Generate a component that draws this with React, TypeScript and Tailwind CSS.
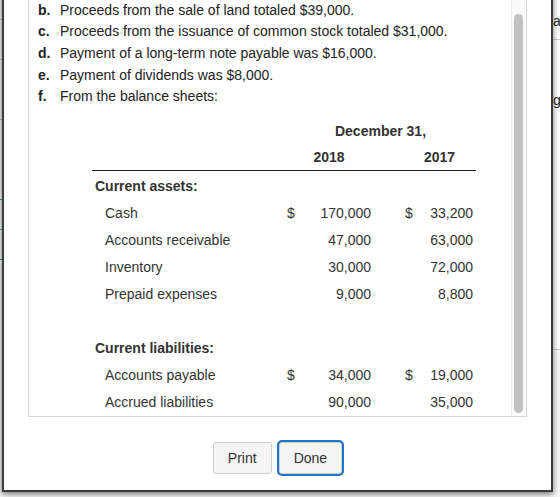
import React from "react";

const items: [string, string][] = [
  ["b.", "Proceeds from the sale of land totaled $39,000."],
  ["c.", "Proceeds from the issuance of common stock totaled $31,000."],
  ["d.", "Payment of a long-term note payable was $16,000."],
  ["e.", "Payment of dividends was $8,000."],
  ["f.", "From the balance sheets:"],
];

type Row =
  | { kind: "head"; label: string }
  | { kind: "blank" }
  | { kind: "row"; label: string; a: string; b: string; dollar?: boolean };

const rows: Row[] = [
  { kind: "head", label: "Current assets:" },
  { kind: "row", label: "Cash", a: "170,000", b: "33,200", dollar: true },
  { kind: "row", label: "Accounts receivable", a: "47,000", b: "63,000" },
  { kind: "row", label: "Inventory", a: "30,000", b: "72,000" },
  { kind: "row", label: "Prepaid expenses", a: "9,000", b: "8,800" },
  { kind: "blank" },
  { kind: "head", label: "Current liabilities:" },
  { kind: "row", label: "Accounts payable", a: "34,000", b: "19,000", dollar: true },
  { kind: "row", label: "Accrued liabilities", a: "90,000", b: "35,000" },
];

function TableRow({ r }: { r: Row }) {
  if (r.kind === "blank") return <div className="h-[27px]" />;
  if (r.kind === "head")
    return (
      <div className="h-[27px] flex items-center pl-[3px] font-bold text-[#333]">{r.label}</div>
    );
  return (
    <div className="h-[27px] grid grid-cols-[193px_88px_30px_73px] items-center text-[#333]">
      <div className="pl-[13px]">{r.label}</div>
      <div className="flex justify-between pl-[2px] pr-[2px]">
        <span>{r.dollar ? "$" : ""}</span>
        <span>{r.a}</span>
      </div>
      <div />
      <div className="flex justify-between pl-[2px] pr-[3px]">
        <span>{r.dollar ? "$" : ""}</span>
        <span>{r.b}</span>
      </div>
    </div>
  );
}

export default function App() {
  return (
    <div
      className="relative w-[560px] h-[497px] overflow-hidden bg-[#f7f7f7] text-[14px]"
      style={{ fontFamily: '"Liberation Sans", Arial, sans-serif' }}
    >
      {/* background page peeking through */}
      <div className="flex h-full">
        <div className="w-[4px] flex flex-col text-[#333]">
          <div className="h-[20px] border-b border-[#bbb]" />
          <div className="h-[40px] border-b border-[#bbb]" />
          <div className="h-[60px] border-b border-[#bbb]" />
          <div className="h-[80px] border-b border-[#5a9bb5]" />
          <div className="h-[30px] border-b border-[#5a9bb5]" />
          <div className="h-[30px] border-b border-[#5a9bb5]" />
        </div>
        <div className="flex-1" />
        <div className="w-[15px] flex flex-col text-[#222] text-[14px] overflow-hidden">
          <div className="h-[40px] pt-[11px] pl-[8px] border-b border-[#ccc] bg-white whitespace-nowrap">at</div>
          <div className="h-[70px] pt-[50px] pl-[8px] bg-white whitespace-nowrap">g</div>
          <div className="h-[240px] border-b border-[#ccc] bg-white" />
        </div>
      </div>

      {/* dialog */}
      <div className="absolute left-[2px] top-[-20px] w-[551px] h-[512px] bg-white border-2 border-[#3c3c3c] shadow-[0_2px_6px_rgba(0,0,0,0.55)] flex flex-col">
        <div className="pt-[8px] px-[24px]">
          <div className="h-[427px] border border-[#d6d6d6] flex overflow-hidden">
            <div className="flex-1 pt-[8.5px] pl-[9px] overflow-hidden">
              <div className="text-[#222] leading-[21.7px]">
                {items.map(([l, t]) => (
                  <div key={l} className="flex">
                    <span className="w-[22px] font-bold">{l}</span>
                    <span>{t}</span>
                  </div>
                ))}
              </div>
              <div className="ml-[54px] mt-[9.5px] w-[384px]">
                <div className="grid grid-cols-[193px_191px] h-[27px] items-center font-bold text-[#333]">
                  <div />
                  <div className="text-center">December 31,</div>
                </div>
                <div className="grid grid-cols-[193px_88px_30px_73px] h-[26px] items-center font-bold text-[#333] border-b border-[#222]">
                  <div />
                  <div className="text-center">2018</div>
                  <div />
                  <div className="text-center">2017</div>
                </div>
                <div className="h-[2px]" />
                {rows.map((r, i) => (
                  <TableRow key={i} r={r} />
                ))}
              </div>
            </div>
            <div className="w-[15px] border-l border-[#ececec] bg-[#fafafa]">
              <div className="ml-[2px] mt-[23px] w-[9px] h-[399px] rounded-full bg-[#c2c2c2]" />
            </div>
          </div>
        </div>
        <div className="mt-[25px] flex justify-center gap-[7px]">
          <button className="h-[32px] px-[14px] bg-[#f5f5f5] border border-[#cfcfcf] rounded-[3px] text-[#333]">
            Print
          </button>
          <button className="h-[32px] px-[14px] bg-[#f5f5f5] border border-[#cfcfcf] rounded-[3px] text-[#333] ring-2 ring-[#1f74c9] ring-offset-0">
            Done
          </button>
        </div>
      </div>
    </div>
  );
}
